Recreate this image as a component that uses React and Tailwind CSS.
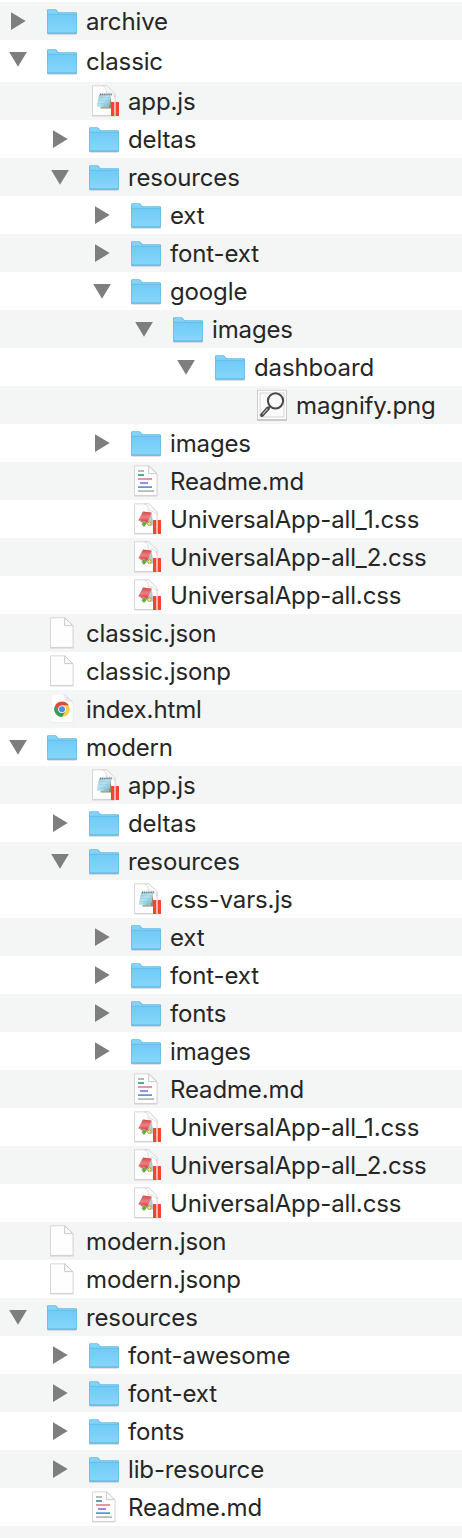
const rows = [
  [0, 'right', 'folder', 'archive'],
  [0, 'down', 'folder', 'classic'],
  [1, '', 'js', 'app.js'],
  [1, 'right', 'folder', 'deltas'],
  [1, 'down', 'folder', 'resources'],
  [2, 'right', 'folder', 'ext'],
  [2, 'right', 'folder', 'font-ext'],
  [2, 'down', 'folder', 'google'],
  [3, 'down', 'folder', 'images'],
  [4, 'down', 'folder', 'dashboard'],
  [5, '', 'png', 'magnify.png'],
  [2, 'right', 'folder', 'images'],
  [2, '', 'md', 'Readme.md'],
  [2, '', 'css', 'UniversalApp-all_1.css'],
  [2, '', 'css', 'UniversalApp-all_2.css'],
  [2, '', 'css', 'UniversalApp-all.css'],
  [0, '', 'blank', 'classic.json'],
  [0, '', 'blank', 'classic.jsonp'],
  [0, '', 'html', 'index.html'],
  [0, 'down', 'folder', 'modern'],
  [1, '', 'js', 'app.js'],
  [1, 'right', 'folder', 'deltas'],
  [1, 'down', 'folder', 'resources'],
  [2, '', 'js', 'css-vars.js'],
  [2, 'right', 'folder', 'ext'],
  [2, 'right', 'folder', 'font-ext'],
  [2, 'right', 'folder', 'fonts'],
  [2, 'right', 'folder', 'images'],
  [2, '', 'md', 'Readme.md'],
  [2, '', 'css', 'UniversalApp-all_1.css'],
  [2, '', 'css', 'UniversalApp-all_2.css'],
  [2, '', 'css', 'UniversalApp-all.css'],
  [0, '', 'blank', 'modern.json'],
  [0, '', 'blank', 'modern.jsonp'],
  [0, 'down', 'folder', 'resources'],
  [1, 'right', 'folder', 'font-awesome'],
  [1, 'right', 'folder', 'font-ext'],
  [1, 'right', 'folder', 'fonts'],
  [1, 'right', 'folder', 'lib-resource'],
  [1, '', 'md', 'Readme.md'],
];

const indents = ['pl-0', 'pl-[42px]', 'pl-[84px]', 'pl-[126px]', 'pl-[168px]', 'pl-[210px]'];

function Arrow({ dir, raised }) {
  return (
    <svg className={`h-[38px] w-[46px] shrink-0 ${raised ? 'mb-1' : ''}`} viewBox="0 0 46 38" fill="#7e7e7e">
      {dir === 'right' && <path d="M11 10.2V28l14.7-8.9z" />}
      {dir === 'down' && <path d="M9.2 12h17.7L18 26.7z" />}
    </svg>
  );
}

function Page({ children, curled }) {
  return (
    <g>
      <path d="M4.2 4.4h15.2l8 7.8v22.1H4.2z" fill="#000" opacity=".1" />
      <path d="M4.5 33.7h22.6" stroke="#a9a9a9" strokeWidth=".9" />
      <path d="M4.5 3.8h14.4l8.1 8V33.4H4.5z" fill="#fefefe" stroke="#d0d0d0" strokeWidth=".8" />
      {curled ? (
        <path d="M14.5 3.8q4 1.2 3.8 7.2 5.4-.9 8.7 4V11.8l-8.1-8z" fill="#f8f8f8" stroke="#d2d2d2" strokeWidth=".7" />
      ) : (
        <path d="M18.6 3.9v7.7h8.2z" fill="#fbfbfb" stroke="#c6c6c6" strokeWidth=".9" />
      )}
      {children}
    </g>
  );
}

function Bars() {
  return (
    <g fill="#f4432f">
      <rect x="23" y="20.1" width="3.3" height="13.8" rx=".5" />
      <rect x="27.7" y="20.1" width="3.3" height="13.8" rx=".5" />
    </g>
  );
}

function Icon({ kind }) {
  return (
    <svg className="h-[38px] w-[32px] shrink-0" viewBox="0 0 32 38">
      <defs>
        <linearGradient id="folderFace" x1="0" y1="0" x2="0" y2="1">
          <stop offset="0" stopColor="#70cbf6" />
          <stop offset="1" stopColor="#86d6fb" />
        </linearGradient>
        <linearGradient id="redFace" x1="0" y1="0" x2="0" y2="1">
          <stop offset="0" stopColor="#cf4848" />
          <stop offset=".55" stopColor="#ee8080" />
          <stop offset="1" stopColor="#d83b3b" />
        </linearGradient>
        <linearGradient id="padFace" x1="0" y1="0" x2="1" y2="1">
          <stop offset="0" stopColor="#8fc9dc" />
          <stop offset=".45" stopColor="#b9e3ee" />
          <stop offset="1" stopColor="#62aec8" />
        </linearGradient>
      </defs>
      {kind === 'folder' && (
        <g>
          <path d="M1.2 30h29.6v1.8q0 1-.9 1H2.1q-.9 0-.9-1z" fill="#000" opacity=".16" />
          <path d="M1 8.5q0-1.3 1.2-1.3h7.2q.8 0 1.3.7l1.2 1.7q.4.6 1.2.6h16.7q1.2 0 1.2 1.2v19.2q0 1-1 1H2q-1 0-1-1z" fill="#62b9e4" />
          <path d="M1.7 8.7q0-.8.8-.8h6.8q.5 0 .9.5l1.3 1.9q.4.6 1.3.6h16.5q.8 0 .8.7v.9H1.7z" fill="#83d2f7" />
          <path d="M1.6 12.7h28.8V30.6H1.6z" fill="url(#folderFace)" />
          <path d="M1.4 12.3h29.2" stroke="#5cbae8" strokeWidth=".7" />
          <path d="M1.3 31.2h29.4" stroke="#5aaed6" strokeWidth=".7" />
        </g>
      )}
      {kind === 'blank' && <Page />}
      {kind === 'md' && (
        <Page>
          <g strokeWidth="1.9">
            <path d="M8 9h6M8 29.1h16" stroke="#b8b8b8" />
            <path d="M8 13h6M8 25.1h14" stroke="#50a5b8" />
            <path d="M8 17h14" stroke="#dc969e" />
            <path d="M10 21h8" stroke="#a47df5" />
          </g>
        </Page>
      )}
      {kind === 'js' && (
        <g>
          <Page curled>
            <path d="M22.5 13.5 23.8 26.4H12.5v-1.2h8.3z" fill="#9c8761" />
            <path d="m11.2 12.2 12.4.3-3 12.7-12-.7z" fill="url(#padFace)" />
            <path d="M11.5 15.6h10.6M10.8 18.5h10.4M10.1 21.5h10.3" stroke="#8fc8da" strokeWidth=".5" />
            <path d="M12.2 12.3h11.4" stroke="#3f5358" strokeWidth="1.7" strokeDasharray="1 1.1" />
          </Page>
          <Bars />
        </g>
      )}
      {kind === 'css' && (
        <g>
          <Page curled>
            <path d="m21.4 12.4 2.4 12.8-5 .8-3.5-5z" fill="#b7c8d2" />
            <path d="m13 11.4 8.7 1-4.1 9.8-9.2-2z" fill="url(#redFace)" />
            <path d="m8.4 20.2 9.2 2-1.2 1.8-3.6-1z" fill="#bb7d86" />
            <path d="M14 22.1v4.4M11.8 24.3h4.4" stroke="#5fae43" strokeWidth="2" />
            <path d="M19.5 21.3v4.6M17.2 23.6h4.6" stroke="#a9a23c" strokeWidth="2" />
            <path d="M19.5 21.8v3.6M17.7 23.6h3.6" stroke="#f0e362" strokeWidth="1.1" />
          </Page>
          <Bars />
        </g>
      )}
      {kind === 'html' && (
        <g>
          <path d="M5 4.8h15l7.4 7.2v20.5H5z" fill="#000" opacity=".07" />
          <path d="M5.3 4.6h13.5l8 7.6v19.7H5.3z" fill="#fefefe" />
          <path d="M16.3 4.6q3.4 1.8 3.2 6.4 4.5-.6 7.3 2.8v-1.6l-8-7.6z" fill="#e5e5e5" />
          <svg x="8" y="11.2" width="16" height="16" viewBox="-8 -8 16 16">
            <circle r="7.8" fill="#fbcf45" />
            <path d="M-6.75-3.9A7.8 7.8 0 0 1 6.75-3.9H0L-3.4 2z" fill="#d94a40" />
            <path d="M-6.75-3.9A7.8 7.8 0 0 0 0 7.8L3.4 2-3.4 2z" fill="#3b9a5d" />
            <circle r="3.8" fill="#fff" />
            <circle r="3" fill="#4b8af4" />
          </svg>
        </g>
      )}
      {kind === 'png' && (
        <g>
          <rect x="1" y="4.7" width="30" height="30" fill="#000" opacity=".25" />
          <rect x="1.4" y="4.2" width="29.2" height="29.2" fill="#fff" stroke="#c4c4c4" strokeWidth=".7" />
          <rect x="4" y="7" width="24" height="24" fill="#fafafa" stroke="#cacaca" strokeWidth=".8" />
          <path d="m6 29 6-6.6" stroke="#484848" strokeWidth="3.8" strokeLinecap="round" />
          <path d="m6.6 28.4 5-5.6" stroke="#b5b5b5" strokeWidth="1.3" />
          <path d="m12.4 22 2-2.2" stroke="#484848" strokeWidth="1.8" />
          <circle cx="19.5" cy="14.8" r="7.6" fill="#f8f8f8" stroke="#484848" strokeWidth="2" />
        </g>
      )}
    </svg>
  );
}

export default function App() {
  return (
    <main className="h-[1538px] w-[462px] overflow-hidden bg-white pt-0.5 font-['Inter',sans-serif] text-[24px] leading-[36px] tracking-[-0.13px] text-[#262626]">
      {rows.map(([level, dir, kind, name], i) => (
        <div
          key={i}
          className={`flex items-center ${i === 1 ? 'h-[42px]' : 'h-[38px]'} ${i % 2 ? 'bg-white' : 'bg-[#f4f5f5]'} ${indents[level]}`}
        >
          <Arrow dir={dir} raised={i === 1} />
          <Icon kind={kind} />
          <span className="ml-2 whitespace-nowrap pt-0.5">{name}</span>
        </div>
      ))}
      <div className="h-3 bg-[#f4f5f5]" />
    </main>
  );
}
